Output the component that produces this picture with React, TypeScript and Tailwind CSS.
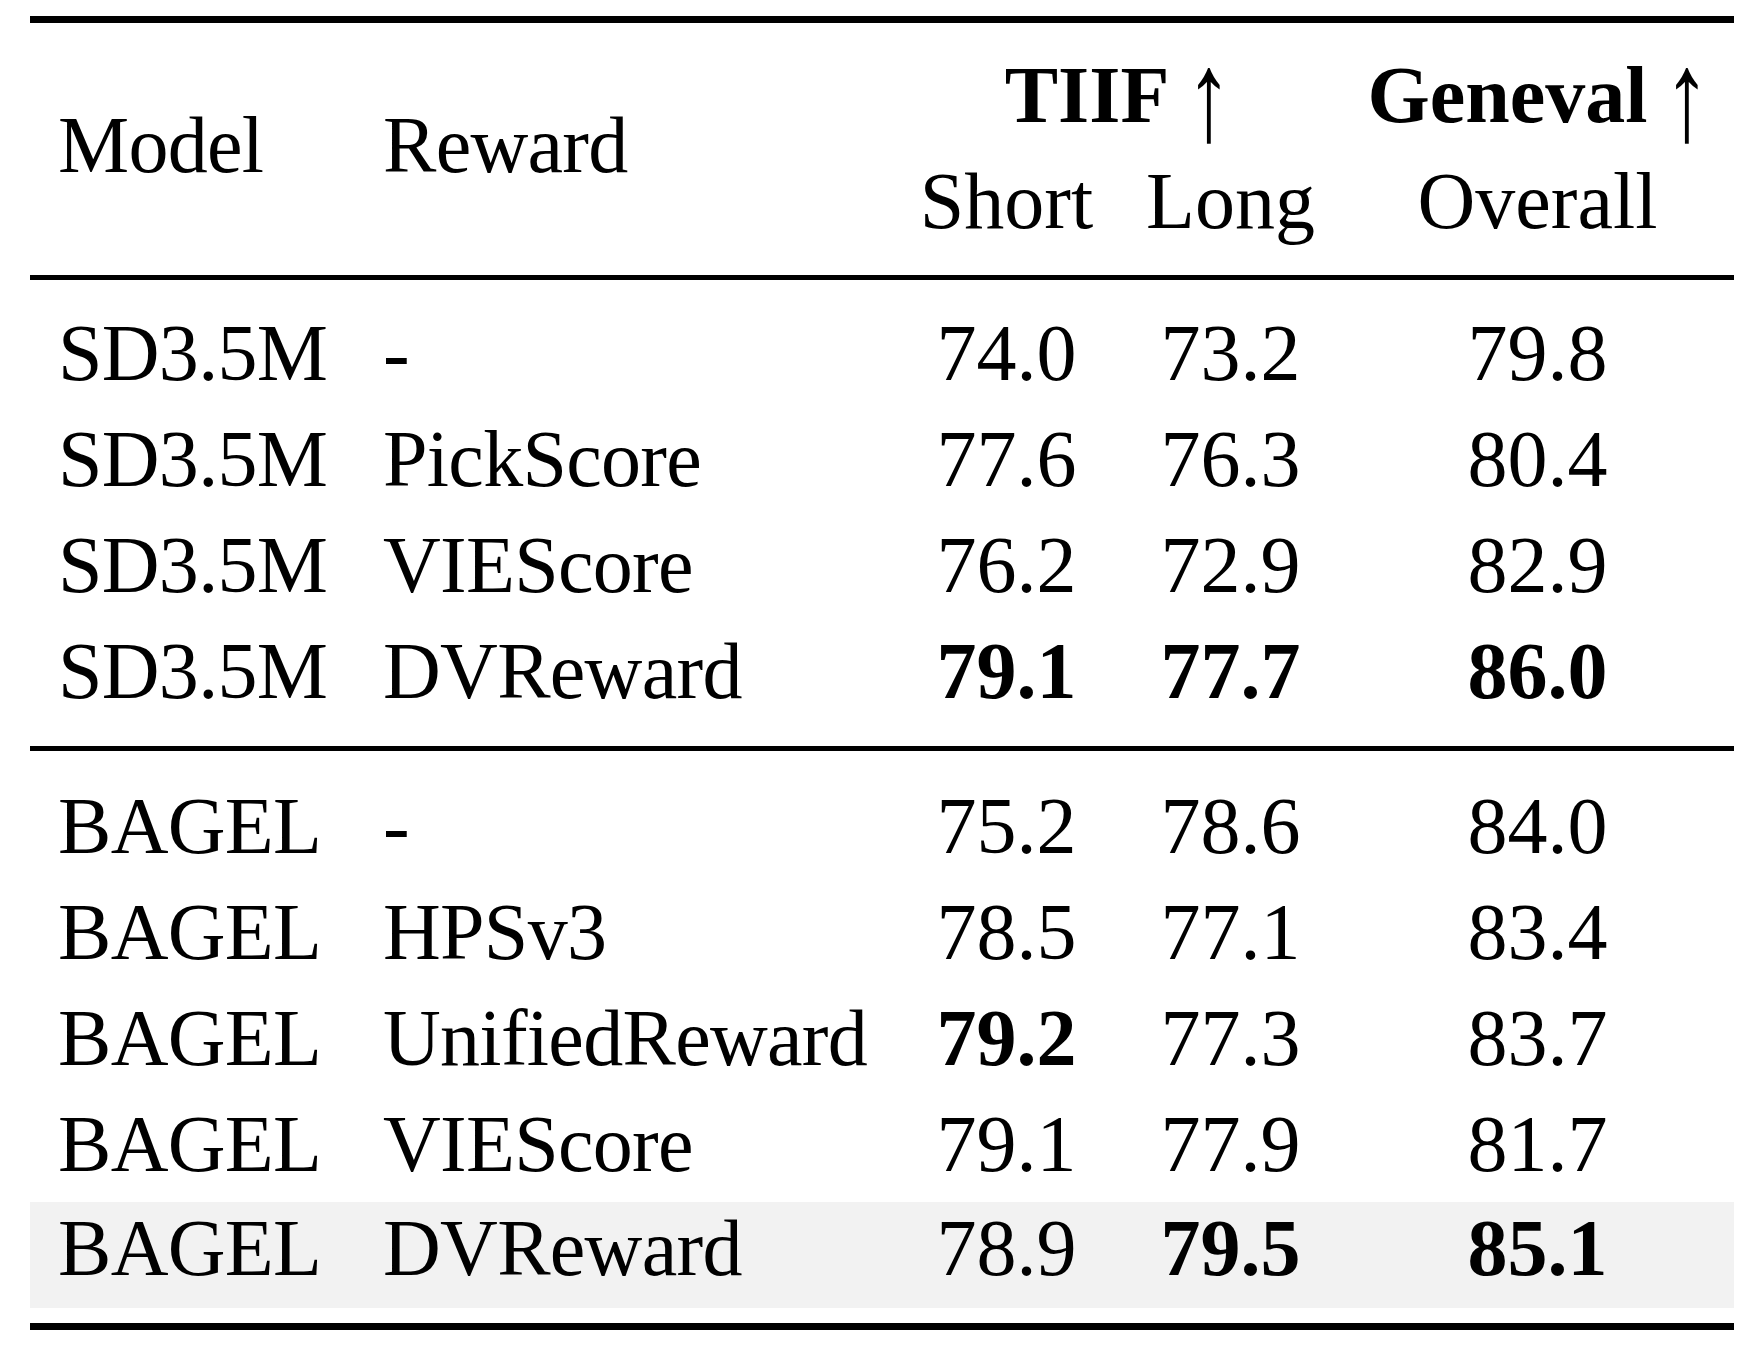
type Row = {
  model: string;
  reward: string;
  short: string;
  long: string;
  overall: string;
  bold?: ("short" | "long" | "overall")[];
};

const sd: Row[] = [
  { model: "SD3.5M", reward: "-", short: "74.0", long: "73.2", overall: "79.8" },
  { model: "SD3.5M", reward: "PickScore", short: "77.6", long: "76.3", overall: "80.4" },
  { model: "SD3.5M", reward: "VIEScore", short: "76.2", long: "72.9", overall: "82.9" },
  {
    model: "SD3.5M",
    reward: "DVReward",
    short: "79.1",
    long: "77.7",
    overall: "86.0",
    bold: ["short", "long", "overall"],
  },
];

const bagel: Row[] = [
  { model: "BAGEL", reward: "-", short: "75.2", long: "78.6", overall: "84.0" },
  { model: "BAGEL", reward: "HPSv3", short: "78.5", long: "77.1", overall: "83.4" },
  { model: "BAGEL", reward: "UnifiedReward", short: "79.2", long: "77.3", overall: "83.7", bold: ["short"] },
  { model: "BAGEL", reward: "VIEScore", short: "79.1", long: "77.9", overall: "81.7" },
];

const last: Row = {
  model: "BAGEL",
  reward: "DVReward",
  short: "78.9",
  long: "79.5",
  overall: "85.1",
  bold: ["long", "overall"],
};

const cols = "grid grid-cols-[325px_538px_227px_221px_393px]";

function DataRow({ row, className = "" }: { row: Row; className?: string }) {
  const b = (k: "short" | "long" | "overall") => (row.bold?.includes(k) ? "font-bold" : "");
  return (
    <div className={`${cols} h-[106px] ${className}`}>
      <div className="pl-[28px] whitespace-nowrap tracking-[-0.7px]">{row.model}</div>
      <div className="pl-[28px] whitespace-nowrap tracking-[-0.7px]">{row.reward}</div>
      <div className={`text-center ${b("short")}`}>{row.short}</div>
      <div className={`text-center ${b("long")}`}>{row.long}</div>
      <div className={`text-center ${b("overall")}`}>{row.overall}</div>
    </div>
  );
}

// tall thin math-style arrow
function Up() {
  return (
    <span className="inline-block origin-center translate-y-[2px] scale-x-[1.15] scale-y-[1.6] font-normal">↑</span>
  );
}

export default function App() {
  return (
    <div className="min-h-screen bg-white pl-[30px] pt-[16px]">
      <div className="w-[1704px] font-['Liberation_Serif',serif] text-[80px] leading-[106px] text-black">
        <div className="h-[7px] bg-black" />

        {/* header */}
        <div className={`${cols} grid-rows-[106px_106px] pt-[19px] pb-[21px]`}>
          <div className="row-span-2 self-center pl-[28px] -mt-[6px] tracking-[-0.7px]">Model</div>
          <div className="row-span-2 self-center pl-[28px] -mt-[6px] tracking-[-0.7px]">Reward</div>
          <div className="col-span-2 text-center whitespace-nowrap">
            <span className="font-bold">TIIF</span> <Up />
          </div>
          <div className="text-center whitespace-nowrap">
            <span className="font-bold">Geneval</span> <Up />
          </div>
          <div className="text-center">Short</div>
          <div className="text-center">Long</div>
          <div className="text-center">Overall</div>
        </div>

        <div className="h-[5px] bg-black" />

        <div className="pt-[20px] pb-[22px]">
          {sd.map((r) => (
            <DataRow key={r.reward} row={r} />
          ))}
        </div>

        <div className="h-[5px] bg-black" />

        <div className="pt-[22px] pb-[15px]">
          {bagel.map((r) => (
            <DataRow key={r.reward} row={r} />
          ))}
          <DataRow row={last} className="mt-[5px] bg-[#f2f2f2] leading-[92px]" />
        </div>

        <div className="h-[7px] bg-black" />
      </div>
    </div>
  );
}
